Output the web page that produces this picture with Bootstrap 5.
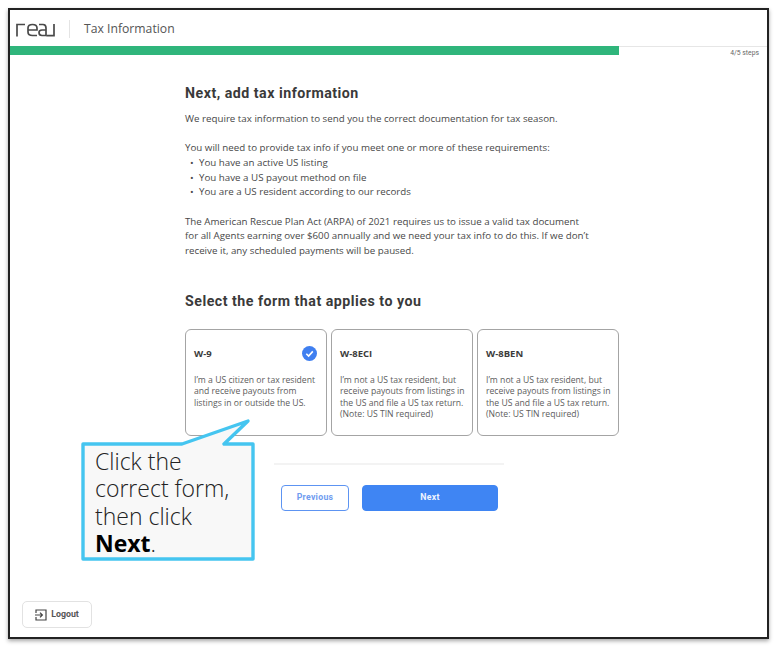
<!DOCTYPE html>
<html lang="en">
<head>
<meta charset="utf-8">
<title>Tax Information</title>
<link href="https://cdn.jsdelivr.net/npm/bootstrap@5.3.0/dist/css/bootstrap.min.css" rel="stylesheet">
<style>
html,body{height:100%;}
body{background:#fff;font-family:"Open Sans",sans-serif;color:#4a4a4a;overflow:hidden;}
.frame{position:relative;margin:8px 0 0 8px;width:761px;height:631px;border:2px solid #222;box-shadow:0 2px 4px rgba(0,0,0,.35);background:#fff;}
.topbar{height:36px;padding:2px 0 0 6px;}
.brand-divider{width:1px;height:18px;background:#e4e4e4;margin:0 14px 0 14px;}
.top-title{font-size:12.2px;color:#555;}
.prog-row{height:9px;}
.prog-track{height:9px;background:transparent;box-shadow:inset 0 1px 0 #e6e6e6;border-radius:0;}
.prog-fill{background:#2fb57b;height:9px;}
.steps{font-family:"Roboto",sans-serif;font-size:6.8px;color:#666;right:8px;top:2px;}
.content-col{width:436px;margin-left:174px;padding-top:28px;}
.head1{font-family:"Roboto",sans-serif;font-weight:700;font-size:14.2px;letter-spacing:.5px;color:#3a3a3a;margin:0;line-height:20px;padding-left:1px;}
.para{font-size:9.75px;line-height:14.7px;margin:0;color:#484848;padding-left:1px;}
.gap-a{margin-top:9px;}
.gap-b{margin-top:14.5px;}
.bul{margin:0;padding-left:15px;list-style:none;}
.bul li{position:relative;}
.bul li::before{content:"•";position:absolute;left:-9px;}
.head2{margin-top:32px;}
.form-row{margin:18px 0 0 1px;gap:4px;}
.form-box{width:142px;height:107px;border:1px solid #a4a4a4;border-radius:6px;padding:17px 4px 0 8px;background:#fff;position:relative;}
.form-name{font-size:9.5px;font-weight:700;color:#3c3c3c;line-height:13px;}
.form-desc{font-size:8.65px;line-height:11.6px;color:#5c5c5c;margin-top:15px;}
.tick{position:absolute;top:16px;right:9px;width:15px;height:15px;}
.rule{width:230px;height:2px;background:#f3f3f3;margin:27px 0 0 90px;}
.btn-row{margin:20px 0 0 97px;gap:13px;}
.btn-prev,.btn-nxt{font-family:"Roboto",sans-serif;font-weight:700;font-size:8.7px;letter-spacing:.3px;height:26px;padding:0;border-radius:4px;display:flex;align-items:center;justify-content:center;}
.btn-prev{width:68px;color:#6f9cf0;background:#fff;border:1px solid #5d94f2;}
.btn-nxt{width:136px;color:#eef4ff;background:#3f85f3;border:1px solid #3f85f3;}
.logout{position:absolute;left:12px;bottom:9px;width:70px;height:27px;border:1px solid #e2e2e2;border-radius:5px;background:#fff;color:#555;font-family:"Roboto",sans-serif;font-weight:700;font-size:8.8px;padding:0;gap:4px;}
.callout{position:absolute;left:71px;top:409px;width:176px;height:142px;}
.callout svg{position:absolute;inset:0;overflow:visible;}
.callout-text{position:absolute;left:14px;top:29px;width:150px;font-size:23px;line-height:27.3px;color:#222;font-weight:300;margin:0;}
.callout-text b{font-weight:700;color:#000;}
</style>
</head>
<body>
<div class="frame">
  <div class="topbar d-flex align-items-center">
    <svg width="39" height="15" viewBox="0 0 39 15" fill="none" stroke="#4a4a4a" stroke-width="1.7" aria-label="real logo">
      <path d="M1 14.5V2.5H9"/>
      <path d="M12 8H21V6Q21 2.5 16.5 2.5Q12 2.5 12 6V10Q12 13.5 16.5 13.5H21"/>
      <path d="M23 2.5H27Q30 2.5 30 6V13.5H26Q23 13.5 23 10.5Q23 8 26 8H30"/>
      <path d="M30.5 13.7H38V2"/>
    </svg>
    <div class="brand-divider"></div>
    <div class="top-title">Tax Information</div>
  </div>
  <div class="prog-row position-relative">
    <div class="prog-track progress"><div class="prog-fill progress-bar" style="width:80.45%"></div></div>
    <div class="steps position-absolute">4/5 steps</div>
  </div>
  <div class="content-col">
    <h1 class="head1">Next, add tax information</h1>
    <p class="para gap-a">We require tax information to send you the correct documentation for tax season.</p>
    <p class="para gap-b">You will need to provide tax info if you meet one or more of these requirements:</p>
    <ul class="para bul">
      <li>You have an active US listing</li>
      <li>You have a US payout method on file</li>
      <li>You are a US resident according to our records</li>
    </ul>
    <p class="para gap-b">The American Rescue Plan Act (ARPA) of 2021 requires us to issue a valid tax document<br>for all Agents earning over $600 annually and we need your tax info to do this. If we don’t<br>receive it, any scheduled payments will be paused.</p>
    <h2 class="head1 head2">Select the form that applies to you</h2>
    <div class="form-row d-flex">
      <div class="form-box">
        <div class="form-name">W-9</div>
        <svg class="tick" viewBox="0 0 15 15"><circle cx="7.5" cy="7.5" r="7.5" fill="#3f7ff0"/><path d="M4.3 7.7L6.6 10L10.8 5.4" fill="none" stroke="#fff" stroke-width="1.6"/></svg>
        <div class="form-desc">I’m a US citizen or tax resident and receive payouts from listings in or outside the US.</div>
      </div>
      <div class="form-box">
        <div class="form-name">W-8ECI</div>
        <div class="form-desc">I’m not a US tax resident, but receive payouts from listings in the US and file a US tax return. (Note: US TIN required)</div>
      </div>
      <div class="form-box">
        <div class="form-name">W-8BEN</div>
        <div class="form-desc">I’m not a US tax resident, but receive payouts from listings in the US and file a US tax return. (Note: US TIN required)</div>
      </div>
    </div>
    <div class="rule"></div>
    <div class="btn-row d-flex">
      <button type="button" class="btn btn-prev">Previous</button>
      <button type="button" class="btn btn-nxt">Next</button>
    </div>
  </div>
  <button type="button" class="btn logout d-flex align-items-center justify-content-center">
    <svg width="12" height="12" viewBox="0 0 12 12" fill="none" stroke="#444" stroke-width="1.2"><path d="M1 4V1H11V11H1V8"/><path d="M0 6H7M5 3.6L7.4 6L5 8.4"/></svg>
    Logout
  </button>
  <div class="callout">
    <svg width="176" height="142" viewBox="0 0 176 142">
      <path d="M2 25H101L167 2L143 25H172V140H2Z" fill="#f8f8f8" stroke="#45c5f0" stroke-width="3.4" stroke-linejoin="round"/>
    </svg>
    <p class="callout-text">Click the correct form, then click <b>Next</b>.</p>
  </div>
</div>
<script src="https://cdn.jsdelivr.net/npm/bootstrap@5.3.0/dist/js/bootstrap.bundle.min.js"></script>
</body>
</html>
